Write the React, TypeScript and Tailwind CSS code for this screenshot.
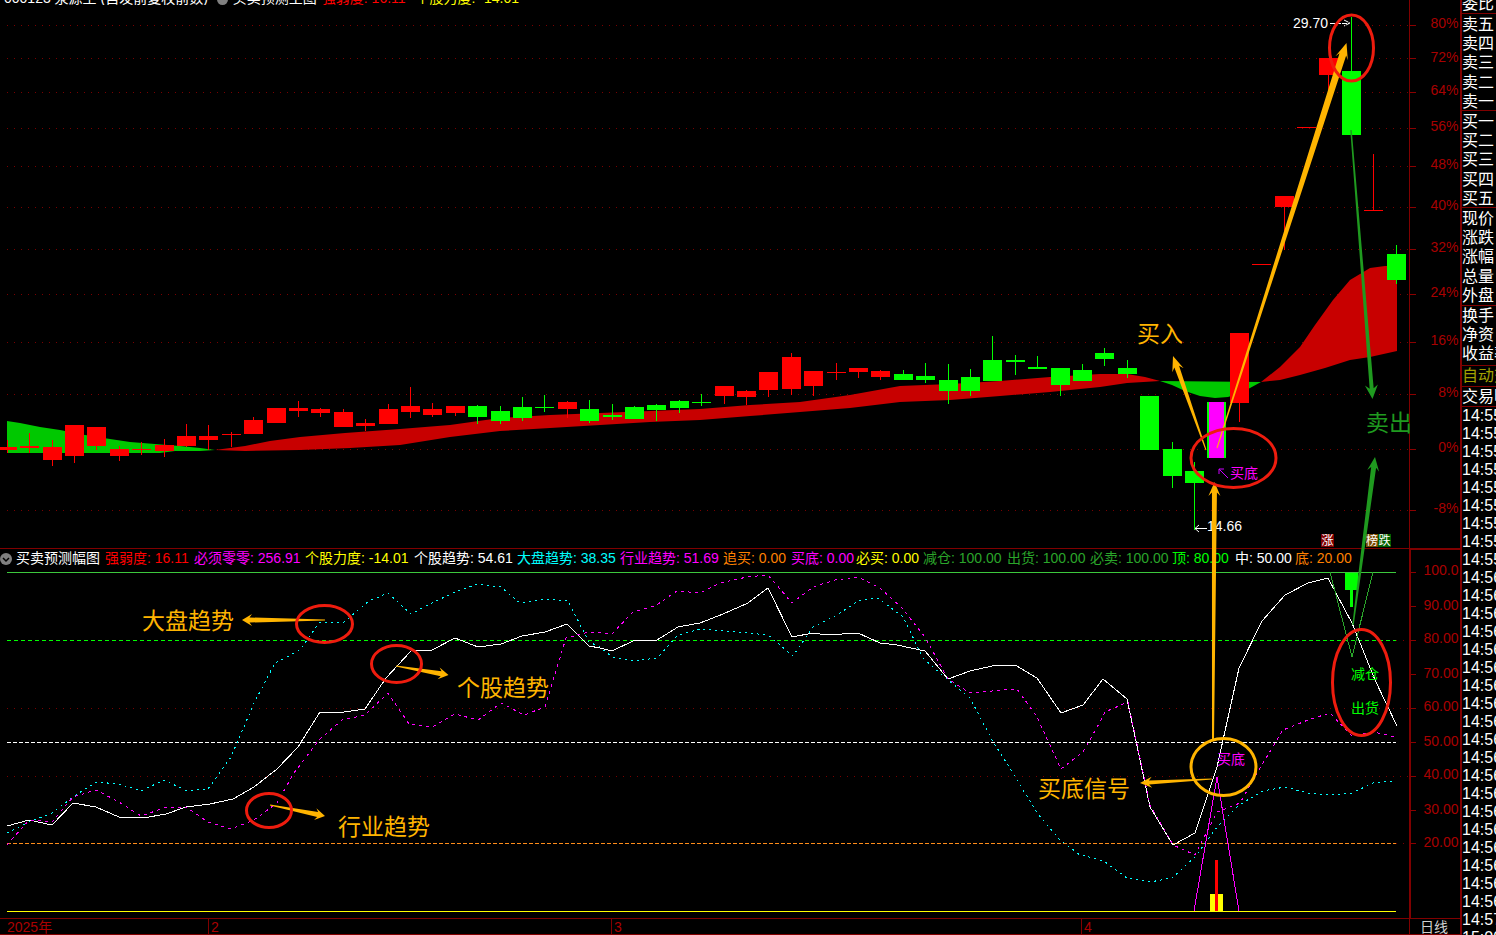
import React from 'react';

type C = [number, number, number, number, number, 'r' | 'g'];
const candles: C[] = [
  [7, 447, 450, 440, 453, 'r'], [29, 446, 448, 433, 453, 'r'], [52, 447, 460, 440, 466, 'r'], [74, 425, 456, 425, 463, 'r'],
  [96, 427, 446, 427, 450, 'r'], [119, 449, 456, 446, 461, 'r'], [141, 449, 450, 442, 455, 'r'], [164, 445, 451, 439, 457, 'r'],
  [186, 436, 446, 424, 447, 'r'], [208, 436, 440, 425, 450, 'r'], [231, 434, 435, 432, 447, 'r'], [253, 420, 434, 417, 434, 'r'],
  [276, 408, 423, 408, 423, 'r'], [298, 408, 411, 401, 417, 'r'], [320, 409, 413, 408, 417, 'r'], [343, 412, 427, 409, 427, 'r'],
  [365, 423, 426, 419, 431, 'r'], [388, 409, 424, 404, 424, 'r'], [410, 406, 412, 387, 418, 'r'], [432, 409, 415, 403, 417, 'r'],
  [455, 406, 413, 406, 416, 'r'], [477, 406, 417, 405, 424, 'g'], [500, 411, 421, 406, 424, 'g'], [522, 407, 418, 397, 421, 'g'],
  [544, 407, 408, 395, 412, 'g'], [567, 402, 409, 401, 418, 'r'], [589, 409, 421, 400, 423, 'g'], [612, 415, 417, 404, 420, 'g'],
  [634, 407, 419, 406, 419, 'g'], [656, 405, 410, 404, 421, 'g'], [679, 401, 408, 400, 413, 'g'], [701, 402, 403, 394, 406, 'g'],
  [724, 386, 396, 386, 404, 'r'], [746, 391, 397, 390, 405, 'r'], [768, 372, 390, 372, 397, 'r'], [791, 357, 389, 353, 395, 'r'],
  [813, 371, 386, 371, 396, 'r'], [836, 372, 373, 363, 380, 'r'], [858, 368, 372, 368, 378, 'r'], [880, 371, 377, 370, 380, 'r'],
  [903, 374, 380, 370, 380, 'g'], [925, 376, 380, 363, 383, 'g'], [948, 380, 391, 364, 404, 'g'], [970, 377, 391, 369, 396, 'g'],
  [992, 360, 381, 336, 381, 'g'], [1015, 360, 362, 355, 375, 'g'], [1037, 367, 369, 356, 369, 'g'], [1060, 368, 385, 368, 396, 'g'],
  [1082, 370, 381, 364, 381, 'g'], [1104, 353, 359, 348, 366, 'g'], [1127, 368, 374, 360, 378, 'g'], [1149, 396, 450, 396, 450, 'g'],
  [1172, 449, 476, 442, 488, 'g'], [1194, 471, 483, 462, 530, 'g'], [1216, 402, 458, 402, 458, 'g'], [1239, 333, 403, 333, 422, 'r'],
  [1261, 264, 265, 264, 265, 'r'], [1284, 196, 207, 196, 250, 'r'], [1306, 127, 128, 127, 128, 'r'], [1328, 58, 75, 58, 90, 'r'],
  [1351, 71, 135, 17, 135, 'g'], [1373, 210, 211, 154, 211, 'r'], [1396, 254, 280, 245, 284, 'g'],
];

const white = '7,826 29,820 52,825 73,803 96,807 119,817 143,818 166,814 186,807 210,804 233,799 254,787 277,769 298,747 320,712 344,712 365,709 386,678 411,651 432,650 455,638 478,647 501,644 522,636 545,632 567,624 589,646 600,648 612,651 633,641 657,640 678,627 700,623 723,614 748,603 768,588 792,637 813,633 827,635 858,633 880,643 897,645 925,651 948,679 970,671 992,666 1015,665 1037,678 1061,713 1083,705 1103,679 1127,699 1150,807 1173,845 1195,833 1217,767 1239,668 1262,621 1285,595 1308,583 1328,578 1352,623 1375,680 1397,726';
const cyan = '7,833 29,822 52,813 73,797 96,782 119,784 141,791 164,780 187,791 208,789 231,757 254,703 275,663 300,650 319,623 344,622 369,601 388,593 411,614 432,603 455,592 478,584 501,587 520,603 545,599 568,601 589,642 600,647 612,657 633,661 657,658 678,635 700,629 727,631 768,635 793,656 813,627 837,615 858,601 878,598 903,617 923,658 948,680 970,698 992,740 1013,773 1037,813 1060,840 1080,855 1098,859 1105,862 1127,878 1150,882 1172,878 1195,857 1217,827 1239,805 1263,791 1285,787 1308,793 1330,795 1352,793 1373,783 1396,781';
const magenta = '7,845 29,820 52,822 73,797 96,790 119,802 141,816 164,808 186,807 208,822 231,829 254,820 277,803 294,773 319,740 342,720 365,715 388,693 409,724 432,727 455,714 478,720 501,703 524,715 545,707 566,638 589,632 612,634 633,612 655,606 677,591 700,593 720,583 747,577 768,575 792,603 813,587 835,580 858,577 880,588 902,608 925,637 948,679 970,693 992,691 1017,689 1037,717 1061,769 1083,752 1100,722 1105,712 1128,702 1150,805 1173,845 1195,855 1217,812 1240,803 1260,768 1283,730 1308,720 1330,713 1352,736 1373,732 1396,737';

const mainTicks: [string, number, number][] = [
  ['80%', 23, 25], ['72%', 57, 58], ['64%', 90, 92], ['56%', 126, 128], ['48%', 164, 166], ['40%', 205, 207],
  ['32%', 247, 249], ['24%', 292, 294], ['16%', 340, 342], ['8%', 392, 394], ['0%', 447, 449], ['-8%', 508, 510],
];
const subTicks: [string, number, number][] = [
  ['100.0', 570, 572], ['90.00', 605, 606], ['80.00', 638, 640], ['70.00', 673, 674], ['60.00', 706, 708],
  ['50.00', 741, 742], ['40.00', 774, 776], ['30.00', 809, 810], ['20.00', 842, 843],
];

const legend: [string, string][] = [
  ['强弱度: 16.11', 'w-[89px] text-[#ff0000]'], ['必须零零: 256.91', 'w-[111px] text-[#ff00ff]'], ['个股力度: -14.01', 'w-[109px] text-[#ffff00]'],
  ['个股趋势: 54.61', 'w-[103px] text-white'], ['大盘趋势: 38.35', 'w-[103px] text-[#00ffff]'], ['行业趋势: 51.69', 'w-[103px] text-[#ff00ff]'],
  ['追买: 0.00', 'w-[68px] text-[#ff8000]'], ['买底: 0.00', 'w-[65px] text-[#ff00ff]'], ['必买: 0.00', 'w-[67px] text-[#ffff00]'],
  ['减仓: 100.00', 'w-[84px] text-[#2aa52a]'], ['出货: 100.00', 'w-[83px] text-[#2aa52a]'], ['必卖: 100.00', 'w-[82px] text-[#2aa52a]'],
  ['顶: 80.00', 'w-[63px] text-[#00ff00]'], ['中: 50.00', 'w-[60px] text-white'], ['底: 20.00', 'text-[#ff8000]'],
];

const ORANGE = '#ffb400';
const DGREEN = '#1f9a1f';
const RED = '#ee1c0e';

function Arrow({ from, to, w, hl, hw, fill, base = 1 }: { from: [number, number]; to: [number, number]; w: number; hl: number; hw: number; fill: string; base?: number }) {
  const dx = to[0] - from[0];
  const dy = to[1] - from[1];
  const len = Math.hypot(dx, dy);
  const ux = dx / len;
  const uy = dy / len;
  const nx = -uy;
  const ny = ux;
  const at = (back: number, side: number) => `${to[0] - ux * back + nx * side},${to[1] - uy * back + ny * side}`;
  const points = [
    `${from[0] + (nx * base) / 2},${from[1] + (ny * base) / 2}`,
    at(hl * 0.75, w / 2),
    at(hl, hw / 2),
    at(0, 0),
    at(hl, -hw / 2),
    at(hl * 0.75, -w / 2),
    `${from[0] - (nx * base) / 2},${from[1] - (ny * base) / 2}`,
  ].join(' ');
  return <polygon points={points} fill={fill} />;
}

function Ring({ cx, cy, rx, ry, color }: { cx: number; cy: number; rx: number; ry: number; color: string }) {
  return <ellipse cx={cx} cy={cy} rx={rx} ry={ry} fill="none" stroke={color} strokeWidth={3} />;
}

function Dotted({ y, x2 = 1409 }: { y: number; x2?: number }) {
  return <line x1={7} x2={x2} y1={y + 0.5} y2={y + 0.5} stroke="#7a0000" strokeDasharray="1 6" shapeRendering="crispEdges" />;
}

function MainChart() {
  return (
    <svg className="block w-[1409px] h-[543px]" viewBox="0 5 1409 543">
      {mainTicks.map(t => <Dotted key={t[0]} y={t[2]} />)}
      <polygon fill="#00c800" points="7,421 20,423 40,427 60,430 85,435 110,439 130,442 155,444 180,446 200,448 215,450 200,451 175,451 160,453 7,453" />
      <polygon fill="#c80000" points="215,450 245,446 270,441 300,437 345,433 400,429 450,425 500,418 550,415 600,413 650,411 700,409 750,405 800,402 850,395 900,386 950,384 1000,381 1050,377 1100,374 1127,374 1145,377 1160,381 1127,383 1100,387 1050,392 1000,396 950,400 900,402 850,408 800,412 750,416 700,420 650,422 600,425 550,428 500,431 450,437 400,445 350,448 300,450 245,451" />
      <polygon fill="#00c800" points="1160,381 1261,382 1250,388 1240,393 1228,397 1215,398 1200,396 1185,391 1172,385" />
      <polygon fill="#c80000" points="1261,382 1280,367 1300,347 1315,325 1333,300 1350,280 1370,268 1385,266 1397,266 1397,351 1370,357 1350,360 1325,368 1300,375 1280,380" />
      {candles.map((c, i) => {
        const x = c[0] - 9;
        const col = c[5] === 'r' ? '#ff0000' : '#00ff00';
        return (
          <g key={i} fill={col} shapeRendering="crispEdges">
            <rect x={c[0]} y={c[3]} width={1} height={c[4] - c[3]} />
            <rect x={x} y={c[1]} width={19} height={c[2] - c[1]} />
          </g>
        );
      })}
      <rect x={1209} y={402} width={15} height={56} fill="#ff00ff" shapeRendering="crispEdges" />
      <text x={1293} y={28} fill="#ffffff" fontSize={14}>29.70</text>
      <path d="M1330 23.5H1349M1344 20L1350 23L1344 26" fill="none" stroke="#ffffff" strokeWidth={1} strokeDasharray="5 1" />
      <path d="M1207 528.5H1195M1199 525L1195 528.5L1199 532" fill="none" stroke="#ffffff" strokeWidth={1} />
      <text x={1207} y={531} fill="#ffffff" fontSize={14}>14.66</text>
      <path d="M1228 478L1219 469M1219 474V469H1224" fill="none" stroke="#cc00ff" strokeWidth={1} />
      <text x={1230} y={478} fill="#ff00ff" fontSize={14}>买底</text>
      <rect x={1321} y={534} width={13} height={13} fill="#800000" />
      <text x={1321.5} y={545} fill="#ffffff" fontSize={12}>涨</text>
      <rect x={1366} y={534} width={12} height={13} fill="#7a4a00" />
      <text x={1366} y={545} fill="#ffffff" fontSize={12}>榜</text>
      <rect x={1378} y={534} width={13} height={13} fill="#006000" />
      <text x={1378.5} y={545} fill="#ffffff" fontSize={12}>跌</text>
    </svg>
  );
}

function SubChart() {
  const line = { fill: 'none', shapeRendering: 'crispEdges' as const };
  return (
    <svg className="block w-[1409px] h-[350px]" viewBox="0 568 1409 350">
      <line x1={7} x2={1396} y1={572.5} y2={572.5} stroke="#3cc83c" shapeRendering="crispEdges" />
      <line x1={7} x2={1396} y1={640.5} y2={640.5} stroke="#00ff00" strokeDasharray="4 3" shapeRendering="crispEdges" />
      <line x1={1396} x2={1409} y1={640.5} y2={640.5} stroke="#7a0000" strokeDasharray="1 6" shapeRendering="crispEdges" />
      <Dotted y={708} />
      <line x1={7} x2={1396} y1={742.5} y2={742.5} stroke="#ffffff" strokeDasharray="4 2" shapeRendering="crispEdges" />
      <Dotted y={776} />
      <line x1={7} x2={1396} y1={843.5} y2={843.5} stroke="#ff8c1a" strokeDasharray="4 2" shapeRendering="crispEdges" />
      <line x1={1396} x2={1409} y1={843.5} y2={843.5} stroke="#7a0000" strokeDasharray="1 6" shapeRendering="crispEdges" />
      <polyline points={white} stroke="#ffffff" {...line} />
      <polyline points={cyan} stroke="#00ffff" strokeDasharray="2 4" {...line} />
      <polyline points={magenta} stroke="#ff00ff" strokeDasharray="3 4" {...line} />
      <polyline points="1194,911 1217,777 1239,911" stroke="#ff00ff" {...line} />
      <polyline points="1330,572 1352,657 1373,572" stroke="#2aa52a" {...line} />
      <rect x={1345} y={573} width={13} height={17} fill="#00ff00" shapeRendering="crispEdges" />
      <rect x={1350} y={573} width={3} height={34} fill="#00ff00" shapeRendering="crispEdges" />
      <line x1={7} x2={1396} y1={911.5} y2={911.5} stroke="#ffff00" shapeRendering="crispEdges" />
      <rect x={1210} y={894} width={13} height={17} fill="#ffff00" shapeRendering="crispEdges" />
      <rect x={1215} y={860} width={3} height={51} fill="#ff0000" shapeRendering="crispEdges" />
      <text x={1217} y={764} fill="#ff00ff" fontSize={14}>买底</text>
      <text x={1351} y={679} fill="#00ff00" fontSize={14}>减仓</text>
      <text x={1351} y={713} fill="#00ff00" fontSize={14}>出货</text>
    </svg>
  );
}

function Axis({ ticks, left, top, width, height, cls }: { ticks: [string, number, number][]; left: number; top: number; width: number; height: number; cls: string }) {
  return (
    <svg className={cls} viewBox={`${left} ${top} ${width} ${height}`}>
      {ticks.map(t => (
        <g key={t[0]}>
          <line x1={1410} x2={1416} y1={t[2] + 0.5} y2={t[2] + 0.5} stroke="#8b0000" shapeRendering="crispEdges" />
          <text x={1458.5} y={t[1] + 5} textAnchor="end" fill="#a80000" fontSize={14}>{t[0]}</text>
        </g>
      ))}
    </svg>
  );
}

function Row({ t, c = 'text-white' }: { t: string; c?: string }) {
  return <div className={`h-[19.2px] leading-[19.2px] whitespace-nowrap ${c}`}>{t}</div>;
}

function Side() {
  const times = [
    ...Array.from({ length: 9 }, () => '14:55'),
    ...Array.from({ length: 19 }, () => '14:56'),
    '14:57',
    '15:00',
  ];
  return (
    <div className="w-[36px] h-[935px] shrink-0 overflow-hidden border-l-2 border-[#800000] text-[16px]">
      <div className="h-[14px] flex items-end leading-[19px] text-white border-b border-[#800000] whitespace-nowrap">委比</div>
      <div className="border-b border-[#800000] h-[97px] pt-[1px]">{['卖五', '卖四', '卖三', '卖二', '卖一'].map(t => <Row key={t} t={t} />)}</div>
      <div className="border-b border-[#800000] h-[97px] pt-[1px]">{['买一', '买二', '买三', '买四', '买五'].map(t => <Row key={t} t={t} />)}</div>
      <div className="border-b border-[#800000] h-[98px] pt-[1px]">{['现价', '涨跌', '涨幅', '总量', '外盘'].map(t => <Row key={t} t={t} />)}</div>
      <div className="border-b border-[#800000] h-[60px]">{['换手', '净资', '收益率'].map(t => <Row key={t} t={t} />)}</div>
      <div className="border-b border-[#800000] h-[21px]"><Row t="自动交易" c="text-[#a0a000]" /></div>
      <div className="border-b border-[#800000] h-[20px]"><Row t="交易明细" /></div>
      {times.map((t, i) => (
        <div key={i} className="h-[18px] leading-[18px] text-white whitespace-nowrap">{t}</div>
      ))}
    </div>
  );
}

function Overlay() {
  const text = { fontSize: 23, fill: ORANGE };
  return (
    <svg className="absolute left-0 top-0 w-[1496px] h-[935px] pointer-events-none" viewBox="0 0 1496 935">
      <Arrow from={[1206, 450]} to={[1173, 356]} w={5} hl={15} hw={12} fill={ORANGE} />
      <Arrow from={[1217, 448]} to={[1346.5, 43]} w={7} hl={16} hw={13} fill={ORANGE} />
      <Arrow from={[1213, 740]} to={[1214.5, 482]} w={5} hl={14} hw={12} fill={ORANGE} base={2} />
      <Arrow from={[1212, 779]} to={[1140, 783]} w={4} hl={12} hw={11} fill={ORANGE} />
      <Arrow from={[325, 620]} to={[242, 620]} w={5} hl={10} hw={12} fill={ORANGE} />
      <Arrow from={[396, 666]} to={[448.5, 675]} w={5} hl={10} hw={12} fill={ORANGE} />
      <Arrow from={[270, 805]} to={[325, 816]} w={5} hl={10} hw={12} fill={ORANGE} />
      <Arrow from={[1351, 130]} to={[1372.5, 399]} w={4} hl={14} hw={13} fill={DGREEN} base={1.5} />
      <Arrow from={[1353, 625]} to={[1375, 457]} w={5} hl={14} hw={12} fill={DGREEN} base={1.5} />
      <Ring cx={1351.5} cy={48} rx={22} ry={33} color={RED} />
      <Ring cx={1233.5} cy={458} rx={42.5} ry={29.5} color={RED} />
      <Ring cx={324.5} cy={624} rx={28} ry={18.5} color={RED} />
      <Ring cx={396.5} cy={664} rx={25} ry={18.5} color={RED} />
      <Ring cx={269} cy={810.5} rx={22.5} ry={17} color={RED} />
      <Ring cx={1361.5} cy={682.5} rx={29} ry={53} color={RED} />
      <Ring cx={1223.5} cy={767} rx={32.5} ry={28.5} color={ORANGE} />
      <text x={142} y={629} {...text}>大盘趋势</text>
      <text x={457} y={696} {...text}>个股趋势</text>
      <text x={338} y={835} {...text}>行业趋势</text>
      <text x={1038} y={797} {...text}>买底信号</text>
      <text x={1137} y={342} {...text}>买入</text>
      <text x={1366} y={431} fontSize={23} fill={DGREEN}>卖出</text>
    </svg>
  );
}

export default function App() {
  return (
    <div className="relative flex w-[1496px] h-[935px] overflow-hidden bg-black font-['Liberation_Sans','Noto_Sans_CJK_SC',sans-serif]">
      <div className="w-[1460px] shrink-0 flex flex-col">
        <div className="flex h-[549px] border-b border-[#800000]">
          <div className="w-[1409px]">
            <div className="h-[5px] flex items-end overflow-hidden text-[14px] leading-[14px] whitespace-nowrap">
              <span className="ml-[4px] text-white">000123 泉源王 (自发前复权前数)</span>
              <span className="ml-[9px] w-[11px] h-[11px] rounded-full bg-[#808080] shrink-0" />
              <span className="ml-[5px] text-white">买卖预测主图</span>
              <span className="ml-[5px] text-[#ff0000]">强弱度: 16.11</span>
              <span className="ml-[10px] text-[#ffff00]">个股力度: -14.01</span>
            </div>
            <MainChart />
          </div>
          <div className="border-l border-[#800000]">
            <Axis ticks={mainTicks} left={1410} top={0} width={50} height={548} cls="block w-[50px] h-[548px]" />
          </div>
        </div>
        <div className="flex h-[370px] border-b border-[#800000]">
          <div className="w-[1409px]">
            <div className="h-[19px] flex items-center whitespace-nowrap text-[14px] leading-[19px]">
              <svg className="w-[12px] h-[12px]" viewBox="0 0 12 12">
                <circle cx={6} cy={6} r={6} fill="#808080" />
                <path d="M3 5L6 8L9 5" fill="none" stroke="#000000" strokeWidth={1.5} />
              </svg>
              <span className="ml-[4px] text-white">买卖预测幅图</span>
              <div className="ml-[5px] flex">
                {legend.map(l => <span key={l[0]} className={`shrink-0 ${l[1]}`}>{l[0]}</span>)}
              </div>
            </div>
            <SubChart />
          </div>
          <div className="border-l-2 border-t border-[#800000]">
            <Axis ticks={subTicks} left={1411} top={550} width={49} height={368} cls="block w-[49px] h-[368px]" />
          </div>
        </div>
        <div className="h-[16px] flex text-[14px] leading-[17px] overflow-hidden border-b border-[#800000]">
          <div className="w-[1409px] flex text-[#a80000]">
            <span className="ml-[7px] w-[201px]">2025年</span>
            <span className="w-[403px] pl-[2px] border-l border-[#800000]">2</span>
            <span className="w-[470px] pl-[2px] border-l border-[#800000]">3</span>
            <span className="pl-[2px] border-l border-[#800000]">4</span>
          </div>
          <div className="pl-[10px] border-l border-[#800000] text-[#d0d0d0]">日线</div>
        </div>
      </div>
      <Side />
      <Overlay />
    </div>
  );
}
